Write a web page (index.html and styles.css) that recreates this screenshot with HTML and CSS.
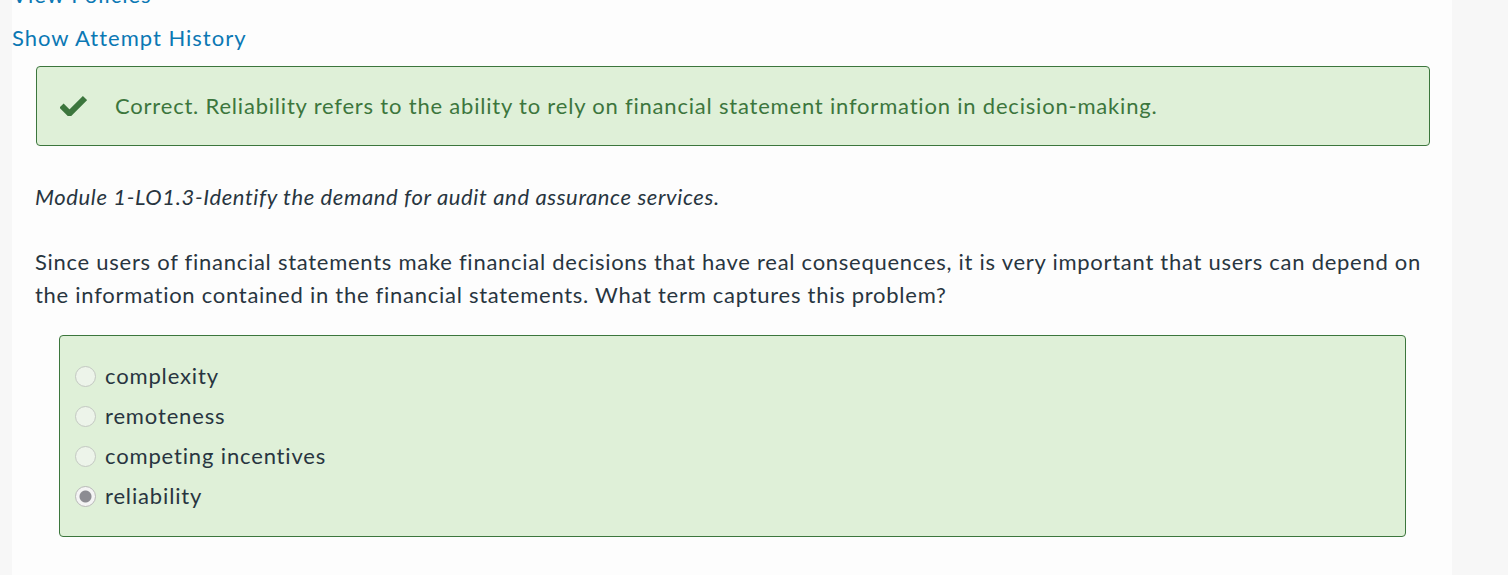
FILE: index.html
```html
<!DOCTYPE html>
<html lang="en">
<head>
    <meta charset="UTF-8">
    <title>Quiz Question</title>
    <link rel="stylesheet" href="styles.css">
</head>
<body>
    <div class="page">
        <div class="main">
            <a class="link link-cut" href="#">View Policies</a>
            <a class="link" href="#">Show Attempt History</a>

            <div class="feedback">
                <svg class="check" width="27" height="21" viewBox="0 0 27 21">
                    <path d="M1.5 10.5 L9.5 18.5 L25 3" fill="none" stroke="#3c763d" stroke-width="6" stroke-linejoin="miter"/>
                </svg>
                <span>Correct. Reliability refers to the ability to rely on financial statement information in decision-making.</span>
            </div>

            <div class="question">
                <p class="module"><em>Module 1-LO1.3-Identify the demand for audit and assurance services.</em></p>
                <p class="text">Since users of financial statements make financial decisions that have real consequences, it is very important that users can depend on the information contained in the financial statements. What term captures this problem?</p>

                <div class="answers">
                    <label class="answer"><span class="radio"></span>complexity</label>
                    <label class="answer"><span class="radio"></span>remoteness</label>
                    <label class="answer"><span class="radio"></span>competing incentives</label>
                    <label class="answer"><span class="radio checked"></span>reliability</label>
                </div>
            </div>
        </div>
        <div class="side"></div>
    </div>
</body>
</html>
```

FILE: styles.css
```css
body {
    margin: 0;
    font-family: Lato, 'Open Sans', sans-serif;
    font-size: 22px;
    line-height: 33px;
    letter-spacing: 0.85px;
    color: #283540;
    background-color: #f7f7f7;
    overflow: hidden;
}
.page {
    display: flex;
    height: 575px;
}
.main {
    margin-left: 12px;
    width: 1440px;
    background-color: #fdfdfd;
}
.side {
    flex: 1;
}
.link {
    display: block;
    color: #0b78b4;
    text-decoration: none;
    letter-spacing: 1px;
}
.link-cut {
    margin-top: -22px;
    margin-bottom: 10px;
}
.feedback {
    display: flex;
    align-items: center;
    margin: 12px 22px 0 24px;
    padding: 22px 0 23px 23px;
    background-color: #dff0d8;
    border: 1px solid #3c763d;
    border-radius: 4px;
    color: #3c763d;
    letter-spacing: 0.8px;
}
.check {
    margin-right: 28px;
    flex-shrink: 0;
}
.question {
    padding: 0 0 0 23px;
}
.module {
    margin: 34px 0 0 0;
    letter-spacing: 0.62px;
}
.text {
    margin: 32px 0 0 0;
    width: 1400px;
    letter-spacing: 0.73px;
}
.answers {
    margin: 24px 46px 0 24px;
    padding: 20px 0 20px 15px;
    background-color: #dff0d8;
    border: 1px solid #3c763d;
    border-radius: 4px;
}
.answer {
    display: flex;
    align-items: center;
    height: 40px;
    line-height: 40px;
}
.radio {
    width: 19px;
    height: 19px;
    border: 1px solid #c3c8c2;
    border-radius: 50%;
    background-color: #edf4ea;
    margin-right: 9px;
    margin-top: 1px;
    box-sizing: content-box;
}
.radio.checked {
    background: radial-gradient(circle, #8c8c92 0 5.5px, #f4f4f4 6.5px);
    border-color: #b9b9b9;
}
```
